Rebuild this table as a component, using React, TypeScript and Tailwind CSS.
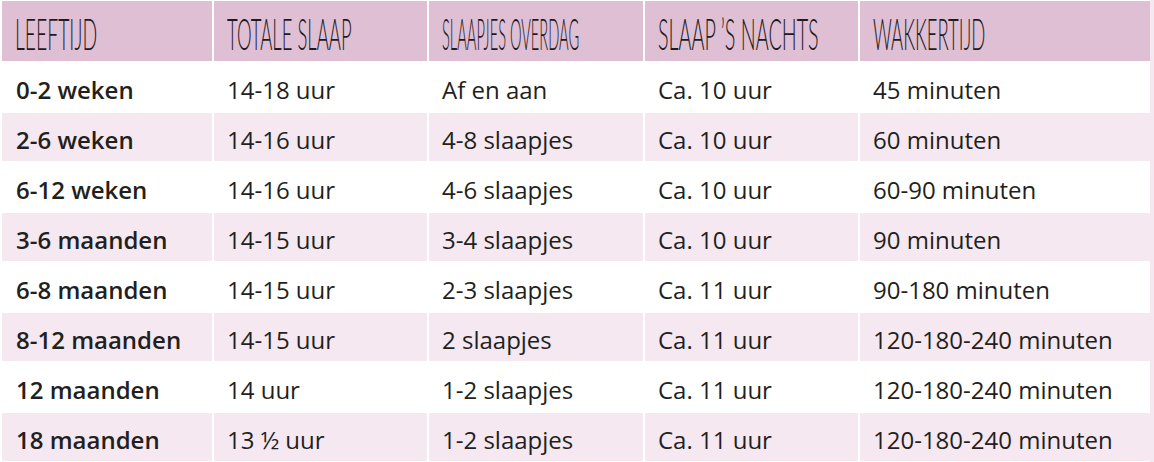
const headers = [
  { label: "LEEFTIJD", scale: "scale-x-[0.45]" },
  { label: "TOTALE SLAAP", scale: "scale-x-[0.43]" },
  { label: "SLAAPJES OVERDAG", scale: "scale-x-[0.34]" },
  { label: "SLAAP ’S NACHTS", scale: "scale-x-[0.46]" },
  { label: "WAKKERTIJD", scale: "scale-x-[0.43]" },
];

const rows = [
  ["0-2 weken", "14-18 uur", "Af en aan", "Ca. 10 uur", "45 minuten"],
  ["2-6 weken", "14-16 uur", "4-8 slaapjes", "Ca. 10 uur", "60 minuten"],
  ["6-12 weken", "14-16 uur", "4-6 slaapjes", "Ca. 10 uur", "60-90 minuten"],
  ["3-6 maanden", "14-15 uur", "3-4 slaapjes", "Ca. 10 uur", "90 minuten"],
  ["6-8 maanden", "14-15 uur", "2-3 slaapjes", "Ca. 11 uur", "90-180 minuten"],
  ["8-12 maanden", "14-15 uur", "2 slaapjes", "Ca. 11 uur", "120-180-240 minuten"],
  ["12 maanden", "14 uur", "1-2 slaapjes", "Ca. 11 uur", "120-180-240 minuten"],
  ["18 maanden", "13 ½ uur", "1-2 slaapjes", "Ca. 11 uur", "120-180-240 minuten"],
];

export default function App() {
  return (
    <div className="flex w-[1154px] h-[462px] bg-white overflow-hidden">
      <div className="w-[1150px] pl-[2px] pt-[1px] bg-white">
        <div className="grid grid-cols-[210px_213px_214px_213px_290px] auto-rows-[48px] grid-rows-[60px] gap-[2px]">
          {headers.map((h) => (
            <div key={h.label} className="flex items-center bg-[#dfbfd3] pl-[13px] pt-[4px] overflow-visible whitespace-nowrap">
              <span
                className={
                  "inline-block origin-left font-['Lato',sans-serif] font-light text-[43px] leading-none text-[#221a1e] " +
                  h.scale
                }
              >
                {h.label}
              </span>
            </div>
          ))}
          {rows.map((r, i) =>
            r.map((cell, j) => (
              <div
                key={i + "-" + j}
                className={
                  "flex items-center pt-[6px] font-['Open_Sans',sans-serif] text-[24px] leading-none whitespace-nowrap text-[#231f20] " +
                  (j === 0 ? "pl-[14px] font-semibold " : "pl-[13px] ") +
                  (i % 2 === 0 ? "bg-white" : "bg-[#f5e8f1]")
                }
              >
                {cell}
              </div>
            ))
          )}
        </div>
      </div>
      <div className="w-[4px] bg-[#f5e8f1]" />
    </div>
  );
}
